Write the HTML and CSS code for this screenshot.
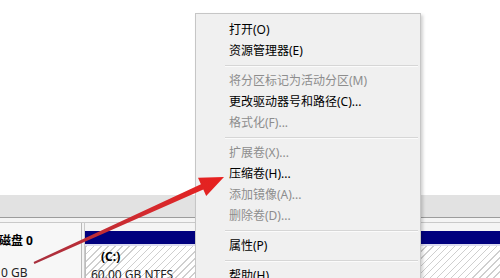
FILE: index.html
```html
<!DOCTYPE html>
<html lang="zh-CN">
<head>
    <meta charset="UTF-8">
    <title>磁盘管理 - 压缩卷</title>
    <link rel="stylesheet" href="styles.css">
</head>
<body>
    <div class="screen">
        <div class="blank"></div>
        <div class="toolbar"></div>
        <div class="spacer"></div>
        <div class="disk-row">
            <div class="disk-label">
                <div class="disk-name">磁盘 0</div>
                <div class="disk-size">0 GB</div>
            </div>
            <div class="partition">
                <div class="part-bar"></div>
                <div class="part-body">
                    <div class="part-name">(C:)</div>
                    <div class="part-info">60.00 GB NTFS</div>
                </div>
            </div>
        </div>

        <ul class="menu">
            <li class="item">打开(O)</li>
            <li class="item">资源管理器(E)</li>
            <li class="sep"></li>
            <li class="item disabled">将分区标记为活动分区(M)</li>
            <li class="item">更改驱动器号和路径(C)...</li>
            <li class="item disabled">格式化(F)...</li>
            <li class="sep"></li>
            <li class="item disabled">扩展卷(X)...</li>
            <li class="item">压缩卷(H)...</li>
            <li class="item disabled">添加镜像(A)...</li>
            <li class="item disabled">删除卷(D)...</li>
            <li class="sep"></li>
            <li class="item">属性(P)</li>
            <li class="sep"></li>
            <li class="item">帮助(H)</li>
        </ul>

        <!-- red pointer arrow drawn on top of the screenshot -->
        <svg class="arrow" width="500" height="278" viewBox="0 0 500 278">
            <defs>
                <linearGradient id="arrowFill" x1="34" y1="263" x2="224" y2="177" gradientUnits="userSpaceOnUse">
                    <stop offset="0" stop-color="#a8303e"/>
                    <stop offset="0.6" stop-color="#d42a2e"/>
                    <stop offset="1" stop-color="#e8201e"/>
                </linearGradient>
            </defs>
            <polygon fill="url(#arrowFill)"
                points="33.6,262.1 200.9,184.2 198,177.8 224,177 206.2,196 203.3,189.6 34.4,263.9"/>
        </svg>
    </div>
</body>
</html>
```

FILE: styles.css
```css
body {
    margin: 0;
    font-family: "Noto Sans", "Noto Sans CJK SC", sans-serif;
    font-size: 12px;
    background-color: #fff;
}

.screen {
    position: relative;
    width: 500px;
    height: 278px;
    overflow: hidden;
    display: flex;
    flex-direction: column;
}

.blank,
.toolbar,
.spacer {
    flex-shrink: 0;
}

.blank {
    height: 195px;
    background-color: #fff;
}

.toolbar {
    height: 22px;
    background-color: #e2e2e2;
    border-bottom: 1px solid #9c9c9c;
}

.spacer {
    height: 4px;
    background-color: #f4f4f4;
}

.disk-row {
    flex: 1;
    min-height: 0;
    display: flex;
    gap: 2px;
    border-top: 1px solid #c9c9c9;
    background-color: #f4f4f4;
}

.disk-label {
    width: 82px;
    flex-shrink: 0;
    border-right: 1px solid #b9b9b9;
    background-color: #f7f7f7;
    padding-top: 10px;
    box-sizing: border-box;
}

.disk-name {
    font-weight: bold;
    line-height: 16px;
    color: #000;
    margin-left: -1px;
}

.disk-size {
    margin-top: 16px;
    line-height: 16px;
    color: #222;
    margin-left: 1px;
}

.partition {
    flex: 1;
    display: flex;
    flex-direction: column;
    padding-top: 8px;
    border-left: 1px solid #c9c9c9;
}

.part-bar {
    height: 13px;
    flex-shrink: 0;
    background-color: #00007e;
    border-bottom: 2px solid #dcdcf0;
}

.part-body {
    flex: 1;
    padding: 3px 0 0 5px;
    border-left: 1px solid #bcbcbc;
    background-color: #fff;
    background-image: repeating-linear-gradient(-45deg, #fff 0, #fff 4px, #cfcfcf 4px, #cfcfcf 5px);
}

.part-name {
    font-weight: bold;
    line-height: 16px;
    color: #000;
    margin-left: 10px;
}

.part-info {
    line-height: 20px;
    color: #222;
}

.menu {
    position: absolute;
    left: 195px;
    top: 13px;
    width: 226px;
    height: 280px;
    margin: 0;
    padding: 5px 2px 0 2px;
    box-sizing: border-box;
    list-style: none;
    background-color: #f0f0f0;
    border: 1px solid #c6c6c6;
    box-shadow: 2px 2px 3px rgba(0, 0, 0, 0.18);
}

.item {
    height: 21px;
    line-height: 21px;
    padding-left: 31px;
    color: #000;
    white-space: nowrap;
}

.item.disabled {
    color: #8d8d8d;
}

.sep {
    height: 9px;
    margin-left: 27px;
    display: flex;
    align-items: center;
}

.sep::before {
    content: "";
    flex: 1;
    border-top: 1px solid #d6d6d6;
    border-bottom: 1px solid #fbfbfb;
}

.arrow {
    position: absolute;
    left: 0;
    top: 0;
}
```
